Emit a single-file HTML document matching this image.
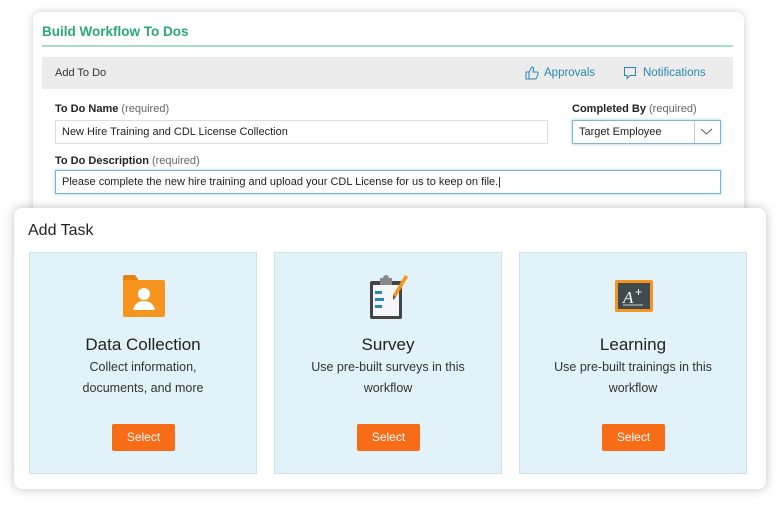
<!DOCTYPE html>
<html><head><style>
*{box-sizing:border-box;margin:0;padding:0}
body{width:780px;height:505px;background:#fff;font-family:"Liberation Sans",sans-serif;position:relative;overflow:hidden;color:#222}
.a{position:absolute}
.card1{left:33px;top:12px;width:711px;height:205px;background:#fff;border-radius:8px;box-shadow:0 0 8px rgba(0,0,0,.2)}
.card2{left:14px;top:208px;width:752px;height:281px;background:#fff;border-radius:8px;box-shadow:0 0 10px rgba(0,0,0,.25)}
.lbl{font-size:11px;font-weight:bold;color:#222}
.lbl span{font-weight:normal;color:#666}
.inp{border:1px solid #ddd;font-size:11px;padding:0 6px;line-height:22px;background:#fff;height:24px}
.foc{border:1.5px solid #7ab8d6;box-shadow:0 0 3px #9cd}
.tile{top:252px;width:228px;height:222px;background:#e1f2f9;border:1px solid #cfe0e8;text-align:center}
.tile h3{position:absolute;top:82px;left:0;right:0;font-weight:normal;font-size:17px;color:#222}
.tile p{position:absolute;top:104px;left:0;right:0;font-size:12.5px;line-height:21px;color:#333}
.btn{position:absolute;left:82px;top:171px;width:63px;height:27px;background:#f86b17;color:#fff;font-size:12px;line-height:27px;border-radius:2px}
.link{color:#2a87b0;font-size:11.5px}
</style></head><body>
<div class="a card1"></div>
<div class="a" style="left:42px;top:24px;font-size:13.5px;font-weight:bold;color:#2aa877">Build Workflow To Dos</div>
<div class="a" style="left:42px;top:45px;width:691px;height:2px;background:#a6e0c8"></div>
<div class="a" style="left:42px;top:57px;width:691px;height:32px;background:#ececec"></div>
<div class="a" style="left:55px;top:67px;font-size:11px;color:#333">Add To Do</div>
<svg class="a" style="left:525px;top:66px" width="14" height="14" viewBox="0 0 14 14" fill="none" stroke="#2a87b0" stroke-width="1"><path d="M1 6h3v7H1zM4 6l3-5c1 0 2 1 1.5 2.5L8 6h4c1 0 1.5 1 1 2l-1.5 4c-.3.7-.8 1-1.5 1H4"/></svg>
<div class="a link" style="left:544px;top:67px">Approvals</div>
<svg class="a" style="left:623px;top:66px" width="14" height="14" viewBox="0 0 14 14" fill="none" stroke="#2a87b0" stroke-width="1"><path d="M1.5 1.5h11v8H7l-3 3v-3H1.5z"/></svg>
<div class="a link" style="left:643px;top:67px">Notifications</div>
<div class="a lbl" style="left:55px;top:103px">To Do Name <span>(required)</span></div>
<div class="a inp" style="left:55px;top:120px;width:493px">New Hire Training and CDL License Collection</div>
<div class="a lbl" style="left:572px;top:103px">Completed By <span>(required)</span></div>
<div class="a inp foc" style="left:572px;top:120px;width:149px">Target Employee</div>
<div class="a" style="left:694px;top:121px;width:1px;height:22px;background:#ccc"></div>
<svg class="a" style="left:700px;top:127px" width="13" height="9" viewBox="0 0 13 9" fill="none" stroke="#555" stroke-width="1"><path d="M1 2l5.5 5L12 2"/></svg>
<div class="a lbl" style="left:55px;top:155px">To Do Description <span>(required)</span></div>
<div class="a inp foc" style="left:55px;top:170px;width:666px">Please complete the new hire training and upload your CDL License for us to keep on file.|</div>

<div class="a card2"></div>
<div class="a" style="left:28px;top:222px;font-size:16px;color:#222">Add Task</div>

<div class="a tile" style="left:29px">
<svg class="a" style="left:92px;top:21px" width="44" height="44" viewBox="0 0 44 44"><path d="M1 3q0-2 2-2h10l3 4v38H3q-2 0-2-2z" fill="#e8820e"/><rect x="1" y="6" width="42" height="37" rx="2" fill="#f7941d"/><circle cx="22" cy="20" r="6" fill="#fff"/><path d="M11 36q2-9 11-9t11 9z" fill="#fff"/></svg>
<h3>Data Collection</h3><p>Collect information,<br>documents, and more</p><div class="btn">Select</div></div>

<div class="a tile" style="left:274px">
<svg class="a" style="left:94px;top:21px" width="40" height="46" viewBox="0 0 40 46"><rect x="1" y="7" width="32" height="38" rx="2" fill="#444"/><rect x="4" y="11" width="26" height="31" fill="#f4f6f8"/><path d="M11 4h12v7H11z" fill="#888"/><circle cx="17" cy="4" r="3" fill="#888"/><rect x="6" y="17" width="7" height="3" fill="#2a87b0"/><rect x="6" y="24" width="9" height="3" fill="#2a87b0"/><rect x="6" y="31" width="7" height="3" fill="#2a87b0"/><path d="M36 1l3 2-12 20-3-2z" fill="#f7941d"/><path d="M24 21l3 2-3 3z" fill="#555"/></svg>
<h3>Survey</h3><p>Use pre-built surveys in this<br>workflow</p><div class="btn">Select</div></div>

<div class="a tile" style="left:519px">
<svg class="a" style="left:95px;top:27px" width="38" height="32" viewBox="0 0 38 32"><rect x="0" y="0" width="38" height="32" rx="2" fill="#f7941d"/><rect x="3" y="3" width="32" height="26" fill="#3f4a4f"/><text x="8" y="23" font-family="Liberation Serif,serif" font-style="italic" font-size="17" fill="#fff">A</text><text x="20" y="16" font-family="Liberation Sans,sans-serif" font-size="12" fill="#fff">+</text><path d="M8 25h20" stroke="#ccc" stroke-width="1"/></svg>
<h3>Learning</h3><p>Use pre-built trainings in this<br>workflow</p><div class="btn">Select</div></div>
</body></html>
